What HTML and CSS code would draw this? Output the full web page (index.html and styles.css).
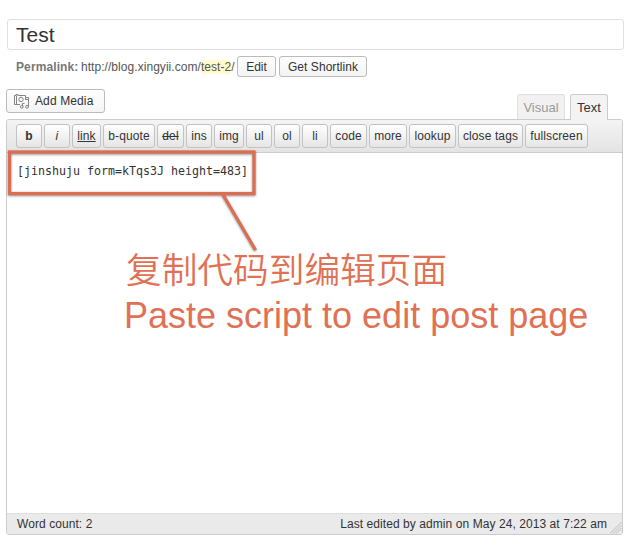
FILE: index.html
```
<!DOCTYPE html>
<html lang="en">
<head>
<meta charset="utf-8">
<title>Edit Post</title>
<link rel="stylesheet" href="styles.css">
</head>
<body>
<main class="page">
  <div class="title">Test</div>
  <div class="permalink">
    <strong>Permalink:</strong>
    <span class="url">http://blog.xingyii.com/<mark>test-2</mark>/</span>
    <button class="btn edit">Edit</button>
    <button class="btn short">Get Shortlink</button>
  </div>
  <div class="tools">
    <button class="btn media">
      <svg width="16" height="16" viewBox="0 0 16 16" fill="none" stroke="#858585">
        <path d="M6 11.500H.5v-9H2v-1h2v1h7.500v2M2.500 2.500v9"/>
        <circle cx="7" cy="6.500" r="2.200"/>
        <path d="M11.500 7V4.500h3V14M11.500 6.500h3M8.500 13.500v-3h2"/>
        <circle cx="7.800" cy="13.800" r="1.400"/>
        <circle cx="13" cy="13.800" r="1.400"/>
      </svg>
      <span>Add Media</span>
    </button>
    <div class="tab visual">Visual</div>
    <div class="tab active">Text</div>
  </div>
  <section class="editor">
    <div class="toolbar">
      <button class="q w26"><b>b</b></button>
      <button class="q w26"><i>i</i></button>
      <button class="q w29"><u>link</u></button>
      <button class="q w52">b-quote</button>
      <button class="q w27"><s>del</s></button>
      <button class="q w26">ins</button>
      <button class="q w30">img</button>
      <button class="q w26">ul</button>
      <button class="q w26">ol</button>
      <button class="q w26">li</button>
      <button class="q w37">code</button>
      <button class="q w38">more</button>
      <button class="q w47">lookup</button>
      <button class="q w65">close tags</button>
      <button class="q w63">fullscreen</button>
    </div>
    <div class="content">[jinshuju form=kTqs3J height=483]</div>
    <div class="status">
      <span class="count">Word count: 2</span>
      <span class="edited">Last edited by admin on May 24, 2013 at 7:22 am</span>
      <svg class="grip" width="12" height="12" viewBox="0 0 12 12" stroke="#bbb" fill="none"><path d="M0 11.500 11.500 0M3 11.500 11.500 3M6 11.500 11.500 6"/></svg>
    </div>
  </section>
  <svg class="callout" width="260" height="115" viewBox="0 0 260 115">
    <path d="M217 47 250.500 104" class="line"/>
    <rect x="4.500" y="6" width="244.500" height="41.500" class="line"/>
  </svg>
  <div class="note">
    <div class="zh" lang="zh-CN">复制代码到编辑页面</div>
    <div class="en">Paste script to edit post page</div>
  </div>
</main>
</body>
</html>
```
FILE: styles.css
```
* { box-sizing: border-box; }
body {
  margin: 0;
  background: #fff;
  color: #333;
  font: 12px/16px "Liberation Sans", Arial, sans-serif;
}
.page {
  position: relative;
  width: 636px;
  height: 545px;
  padding: 19px 13px 0 6px;
  overflow: hidden;
}
.title {
  height: 31px;
  margin-left: 1px;
  width: 617px;
  padding: 0 8px;
  border: 1px solid #dfdfdf;
  border-radius: 3px;
  font-size: 21px;
  line-height: 29px;
}
.permalink {
  display: flex;
  align-items: center;
  height: 21px;
  margin: 6px 0 12px 10px;
  color: #555;
}
.permalink strong { width: 65px; color: #777; white-space: nowrap; letter-spacing: 0.1px; }
.url { width: 156px; white-space: nowrap; letter-spacing: 0.05px; }
.url mark { background: #fffbcc; color: inherit; }
.btn, .q {
  padding: 0;
  border: 1px solid #bbb;
  border-radius: 3px;
  color: #333;
  font: inherit;
  white-space: nowrap;
}
.btn { height: 21px; background: linear-gradient(#fefefe, #f4f4f4); }
.edit { width: 39px; margin-right: 3px; }
.short { width: 88px; letter-spacing: 0.05px; }
.tools { display: flex; height: 30px; }
.media {
  display: flex;
  align-items: center;
  gap: 5px;
  width: 99px;
  height: 24px;
  padding-left: 7px;
  margin-right: 412px;
  letter-spacing: 0.12px;
}
.tab {
  position: relative;
  z-index: 1;
  height: 25px;
  margin-top: 5px;
  border: 1px solid #dfdfdf;
  border-bottom: 0;
  border-radius: 3px 3px 0 0;
  background: #f1f1f1;
  color: #999;
  font-size: 13px;
  line-height: 25px;
  text-align: center;
}
.visual { width: 48px; margin-right: 5px; }
.active { width: 38px; height: 26px; border-color: #ccc; background: #f3f3f3; color: #333; }
.editor {
  display: flex;
  flex-direction: column;
  width: 617px;
  height: 416px;
  border: 1px solid #ccc;
  border-radius: 3px;
  overflow: hidden;
}
.toolbar {
  display: flex;
  gap: 2px;
  height: 33px;
  padding: 4px 9px;
  border-bottom: 1px solid #ccc;
  background: linear-gradient(#f4f4f4, #e4e4e4);
}
.q { height: 24px; border-color: #c3c3c3; background: linear-gradient(#fff, #e5e5e5); letter-spacing: 0.1px; }
.w26 { width: 26px; } .w27 { width: 27px; } .w29 { width: 29px; }
.w30 { width: 30px; } .w37 { width: 37px; } .w38 { width: 38px; }
.w47 { width: 47px; } .w52 { width: 52px; } .w63 { width: 63px; } .w65 { width: 65px; }
.content {
  flex: 1;
  padding: 10px;
  font: 11.63px/17px "DejaVu Sans Mono", monospace;
}
.status {
  display: flex;
  justify-content: space-between;
  height: 21px;
  padding-left: 10px;
  border-top: 1px solid #dfdfdf;
  background: #eaeaea;
  line-height: 20px;
  letter-spacing: 0.07px;
}
.edited { margin-left: auto; margin-right: 3px; }
.grip { align-self: flex-end; }
.callout { position: absolute; left: 5px; top: 146px; filter: drop-shadow(0 1px 1px rgba(0, 0, 0, .45)); }
.line { fill: none; stroke: #dd6c50; stroke-width: 3.200; }
.note { position: absolute; left: 125px; top: 245px; color: #e07154; white-space: nowrap; }
.zh { margin-left: 1px; font: 350 35.7px/46px "Noto Sans CJK SC", "Noto Sans CJK SC DemiLight", sans-serif; }
.en { margin: 2px 0 0 -1px; font-size: 36px; line-height: 46px; }
```
